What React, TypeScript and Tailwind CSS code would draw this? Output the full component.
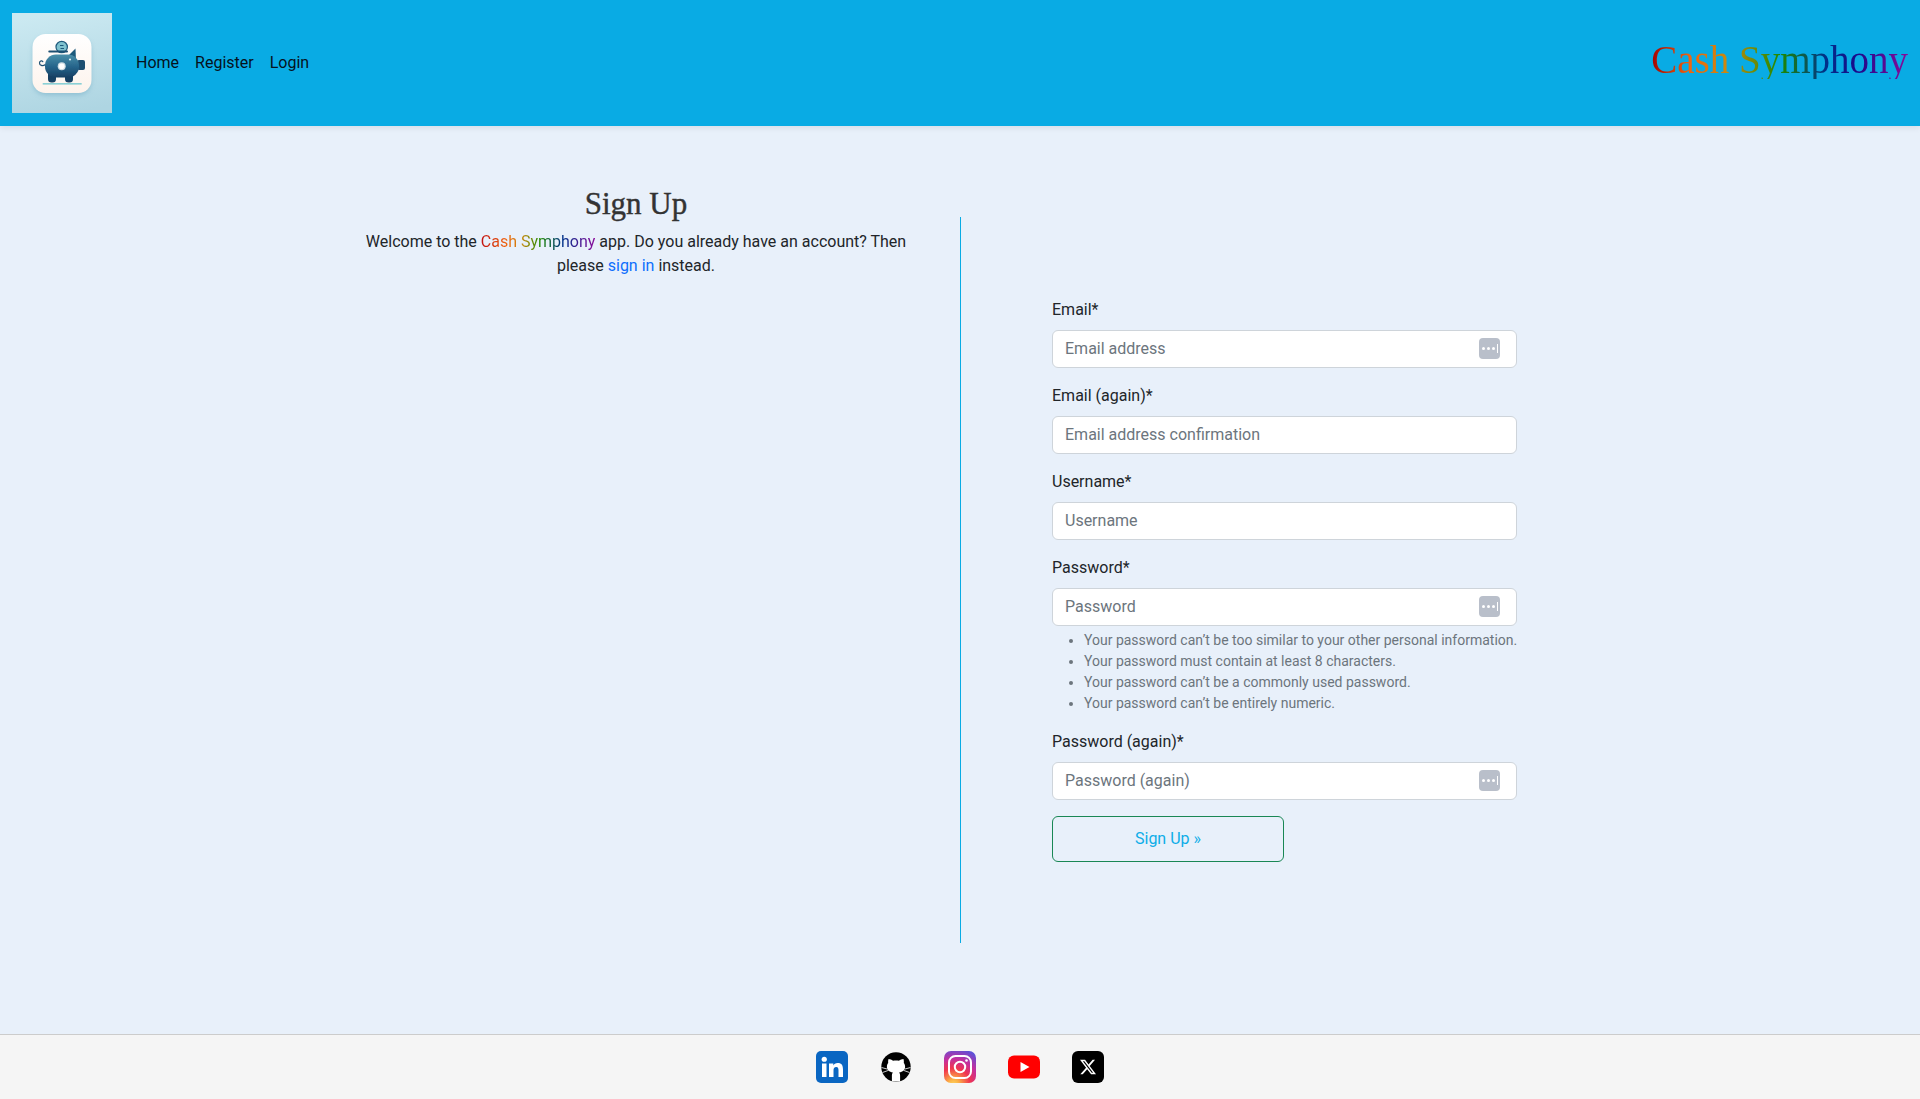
import React from "react";

function PiggyLogo() {
  return (
    <svg viewBox="0 0 100 100" className="w-[100px] h-[100px] shrink-0">
      <defs>
        <linearGradient id="tile" x1="0.4" y1="0" x2="0.6" y2="1">
          <stop offset="0" stopColor="#cbe9f1" />
          <stop offset="1" stopColor="#aed5e2" />
        </linearGradient>
        <linearGradient id="card" x1="0" y1="0" x2="0" y2="1">
          <stop offset="0" stopColor="#ffffff" />
          <stop offset="1" stopColor="#fdf3ec" />
        </linearGradient>
        <linearGradient id="pig" x1="0" y1="0" x2="0" y2="1">
          <stop offset="0" stopColor="#4a8fa9" />
          <stop offset="0.55" stopColor="#25638a" />
          <stop offset="1" stopColor="#173f63" />
        </linearGradient>
        <filter id="soft" x="-30%" y="-30%" width="160%" height="160%">
          <feGaussianBlur stdDeviation="2.5" />
        </filter>
        <filter id="blurry" x="-10%" y="-10%" width="120%" height="120%">
          <feGaussianBlur stdDeviation="0.3" />
        </filter>
      </defs>
      <rect width="100" height="100" fill="url(#tile)" />
      <rect x="21" y="24" width="58" height="58" rx="13" fill="#6fa9c2" opacity="0.55" filter="url(#soft)" />
      <rect x="20.5" y="21" width="59" height="59" rx="13" fill="url(#card)" />
      <g filter="url(#blurry)">
        {/* coin and slot */}
        <circle cx="49.7" cy="34" r="5.7" fill="#7fc2cf" stroke="#1f5a7c" strokeWidth="1.2" />
        <path d="M48 32.5h3.5M48.5 35.5h3.5" stroke="#1f5a7c" strokeWidth="1" />
        <rect x="36.3" y="37.5" width="19.7" height="1.9" rx="0.9" fill="#1f4f72" />
        {/* tail */}
        <path d="M33.5 51.5c-3 2-6 1-6-1.5s3-3 3.5-.8" fill="none" stroke="#1f4f72" strokeWidth="1.2" />
        {/* legs */}
        <rect x="36" y="58" width="8" height="11.5" rx="3.5" fill="#173f63" />
        <rect x="53" y="58" width="8" height="11.5" rx="3.5" fill="#173f63" />
        {/* ear */}
        <path d="M55 44 L63.5 35.5 L64 48 Z" fill="#1f5a7c" />
        {/* snout */}
        <rect x="65" y="47" width="8" height="10" rx="2" fill="#1f4f72" />
        {/* body */}
        <rect x="33" y="41.5" width="34" height="23" rx="11" fill="url(#pig)" />
        <circle cx="49.7" cy="53.3" r="4" fill="#cfdde4" />
        <circle cx="49.7" cy="53.3" r="2.8" fill="#ffffff" />
        <circle cx="58" cy="46.5" r="1.1" fill="#dbeef3" />
        <rect x="30.7" y="70.2" width="39" height="1.3" fill="#6fc8cf" />
      </g>
    </svg>
  );
}

function LinkedinIcon() {
  return (
    <svg viewBox="0 0 32 32" className="w-8 h-8">
      <rect width="32" height="32" rx="5" fill="#0a66c2" />
      <rect x="6" y="12.5" width="4.5" height="13.5" fill="#ffffff" />
      <circle cx="8.25" cy="8.25" r="2.6" fill="#ffffff" />
      <path
        d="M13 12.5h4.3v1.9c.7-1.2 2.2-2.3 4.3-2.3 4.3 0 5.4 2.7 5.4 6.5V26h-4.5v-6.5c0-1.900-.3-3.500-2.300-3.500s-2.700 1.500-2.700 3.400V26H13Z"
        fill="#ffffff"
      />
    </svg>
  );
}

function GithubIcon() {
  return (
    <svg viewBox="0 0 32 32" className="w-8 h-8">
      <circle cx="16" cy="16" r="14.7" fill="#000000" />
      {/* cat head and body, white on the black disc */}
      <path
        d="M8.500 8c1.600 0 3.200.8 4.500 1.800 2-.5 4-.5 6 0C20.300 8.800 21.900 8 23.500 8c.4 1.400.5 2.800.3 4 .9 1.100 1.300 2.400 1.300 3.800 0 3.400-2.300 5.200-6 5.700.7.700 1 1.600 1 2.700v6.300h-8.200v-6.300c0-1.100.3-2 1-2.700-3.700-.5-6-2.300-6-5.700 0-1.400.4-2.700 1.300-3.800-.2-1.200-.1-2.600.3-4Z"
        fill="#ffffff"
      />
      {/* whiskers */}
      <path d="M1.500 16.500 7 18M2.500 21.500 8 19.500M30.500 16.500 25 18M29.500 21.500 24 19.500" stroke="#ffffff" strokeWidth="0.8" />
    </svg>
  );
}

function InstagramIcon() {
  return (
    <svg viewBox="0 0 32 32" className="w-8 h-8">
      <defs>
        <radialGradient id="ig" cx="0.3" cy="1.05" r="1.15">
          <stop offset="0" stopColor="#fdd55f" />
          <stop offset="0.15" stopColor="#fcb045" />
          <stop offset="0.45" stopColor="#f0344f" />
          <stop offset="0.7" stopColor="#c42f9e" />
          <stop offset="1" stopColor="#5b51d8" />
        </radialGradient>
      </defs>
      <rect width="32" height="32" rx="7" fill="url(#ig)" />
      <rect x="5" y="5" width="22" height="22" rx="6.5" fill="none" stroke="#ffffff" strokeWidth="2" />
      <circle cx="16" cy="16" r="5.2" fill="none" stroke="#ffffff" strokeWidth="2" />
      <circle cx="22.5" cy="9.5" r="1.3" fill="#ffffff" />
    </svg>
  );
}

function YoutubeIcon() {
  return (
    <svg viewBox="0 0 32 32" className="w-8 h-8">
      <rect x="0" y="4.5" width="32" height="23" rx="6" fill="#ff0000" />
      <path d="M12.5 11v10l9-5Z" fill="#ffffff" />
    </svg>
  );
}

function XIcon() {
  return (
    <svg viewBox="0 0 32 32" className="w-8 h-8">
      <rect width="32" height="32" rx="6" fill="#000000" />
      <g transform="translate(8 8) scale(0.667)">
        <path
          d="M18.901 1.153h3.68l-8.04 9.19L24 22.846h-7.406l-5.8-7.584-6.638 7.584H.474l8.6-9.83L0 1.154h7.594l5.243 6.932ZM17.61 20.644h2.039L6.486 3.24H4.298Z"
          fill="#ffffff"
        />
      </g>
    </svg>
  );
}

function KeyBadge() {
  return (
    <span className="absolute right-[17px] top-[8px] w-[21px] h-[21px] rounded-[4px] bg-[#b9bfca] flex items-center justify-center gap-[2px] pointer-events-none">
      <span className="w-[3px] h-[3px] rounded-full bg-white" />
      <span className="w-[3px] h-[3px] rounded-full bg-white" />
      <span className="w-[3px] h-[3px] rounded-full bg-white" />
      <span className="w-[1px] h-[9px] bg-white" />
    </span>
  );
}

function Field({ label, placeholder, badge, type = "text" }: { label: string; placeholder: string; badge?: boolean; type?: string }) {
  return (
    <div>
      <label className="block mb-2 text-[#212529]">{label}</label>
      <div className="relative">
        <input
          type={type}
          placeholder={placeholder}
          className="block w-full h-[38px] px-3 pb-[2px] bg-white border border-[#ced4da] rounded-md text-base text-[#212529] placeholder:text-[#6c757d] outline-none"
        />
        {badge && <KeyBadge />}
      </div>
    </div>
  );
}

export default function App() {
  return (
    <div className="min-h-[1099px] flex flex-col bg-[#e8f0fa] font-['Roboto',sans-serif] text-base text-[#212529]">
      {/* Header */}
      <header className="h-[126px] bg-[#09abe4] flex items-center pl-3 pr-3 shadow-[0_2px_6px_rgba(0,0,0,0.08)]">
        <PiggyLogo />
        <nav className="flex ml-4 text-[#06121c]">
          <a className="px-2">Home</a>
          <a className="px-2">Register</a>
          <a className="px-2">Login</a>
        </nav>
        <div className="ml-auto mb-[7px] font-['Liberation_Serif',serif] text-[39px] leading-none bg-[linear-gradient(90deg,#a30000,#f0640f_15%,#c88a10_30%,#1f8a00_50%,#00308a_68%,#1a0a8a_80%,#8a0a9a_100%)] bg-clip-text text-transparent">
          Cash Symphony
        </div>
      </header>

      {/* Main */}
      <main className="flex-1 w-[1296px] mx-auto flex items-start">
        <section className="w-[648px] px-12 pt-[59px] text-center">
          <h1 className="font-['Liberation_Serif',serif] text-[31px] leading-[38px] font-medium text-[#333333] [-webkit-text-stroke:0.4px_#333333] mb-[7px]">Sign Up</h1>
          <p>
            Welcome to the{" "}
            <span className="bg-[linear-gradient(90deg,#c01010,#f0640f_22%,#c88a10_36%,#1f8a00_52%,#00308a_72%,#8a0a9a_100%)] bg-clip-text text-transparent">
              Cash Symphony
            </span>{" "}
            app. Do you already have an account? Then please <a className="text-[#0d6efd]">sign in</a> instead.
          </p>
        </section>

        <section className="mt-[91px] h-[726px] border-l border-[#09abe4] pl-[91px] flex items-center">
          <form className="w-[465px] flex flex-col gap-4">
            <Field label="Email*" placeholder="Email address" badge type="email" />
            <Field label="Email (again)*" placeholder="Email address confirmation" type="email" />
            <Field label="Username*" placeholder="Username" />
            <div>
              <Field label="Password*" placeholder="Password" badge type="password" />
              <ul className="list-disc pl-8 mt-[4px] text-sm leading-[21px] text-[#6c757d] whitespace-nowrap">
                <li>Your password can’t be too similar to your other personal information.</li>
                <li>Your password must contain at least 8 characters.</li>
                <li>Your password can’t be a commonly used password.</li>
                <li>Your password can’t be entirely numeric.</li>
              </ul>
            </div>
            <Field label="Password (again)*" placeholder="Password (again)" badge type="password" />
            <button type="button" className="w-[232px] h-[46px] border border-[#198754] rounded-md text-[#0dade8]">
              Sign Up »
            </button>
          </form>
        </section>
      </main>

      {/* Footer */}
      <footer className="h-[65px] border-t border-[#cccccc] bg-[#f5f5f5] flex items-center justify-center gap-8">
        <LinkedinIcon />
        <GithubIcon />
        <InstagramIcon />
        <YoutubeIcon />
        <XIcon />
      </footer>
    </div>
  );
}
